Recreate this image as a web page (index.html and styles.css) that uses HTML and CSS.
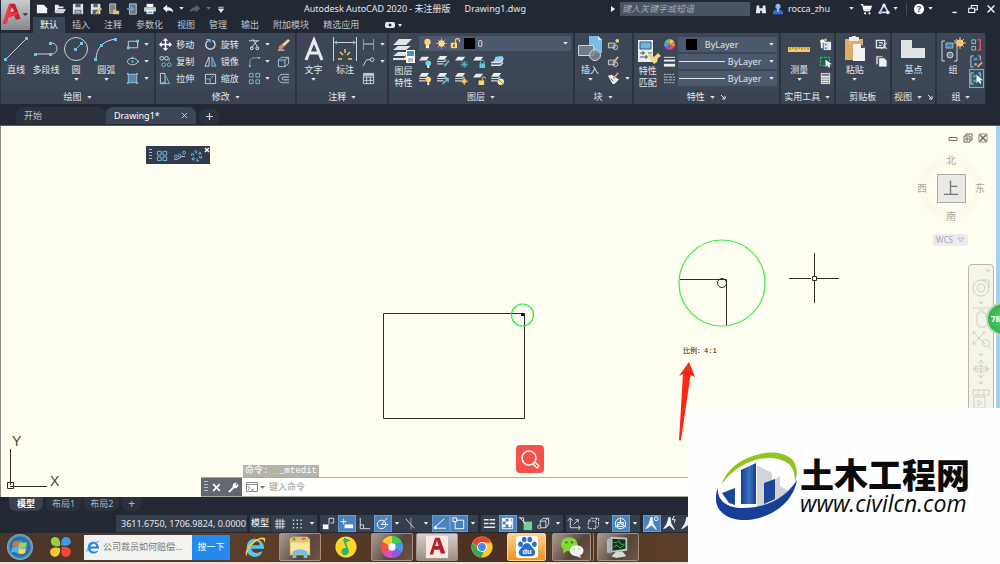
FILE: index.html
```html
<!DOCTYPE html>
<html lang="zh-CN">
<head>
<meta charset="utf-8">
<meta name="viewport" content="width=device-width, initial-scale=1">
<title>Autodesk AutoCAD 2020 - 未注册版 Drawing1.dwg</title>
<link rel="stylesheet" href="styles.css">
</head>
<body>
<svg class="defs" aria-hidden="true">
  <symbol id="down" viewBox="0 0 6 4"><path d="M0 0h6L3 3.6z" fill="#e4e7ea"/></symbol>
  <symbol id="sheets" viewBox="0 0 14 14"><path d="M3 1h8L8 5H0z" fill="#eceeef"/><path d="M0 7h8l2-2M0 9.500h7" fill="none" stroke="#cfd4d8" stroke-width="1.300"/></symbol>
  <symbol id="sheet" viewBox="0 0 14 14"><path d="M3 2h8L8 6H0z" fill="#e6e8ea"/></symbol>
  <symbol id="figure" viewBox="0 0 18 18"><path d="M8 2L6 9l-4 6 3-1 4-3 4 4 2 1-4-7-1-7z" fill="#edf1f4"/></symbol>
</svg>

<header class="top">
  <button class="app-menu" aria-label="应用程序菜单"><svg viewBox="0 0 30 30"><path d="M2 24L9 3h6l6 16-5 1-2-5-6 2-2 7z" fill="#c81e28"/><path d="M2 24L9 3l3 5-2 5 8-1 1 2-11 4-2 6z" fill="#ec3a42"/><path d="M10 12l2-5 2 4z" fill="#d8dadb"/><path d="M23 13h6l-3 3z" fill="#333"/></svg></button>
  <div class="titlebar">
    <div class="quick">
      <button aria-label="新建"><svg viewBox="0 0 14 14"><path d="M1 2h8l4 4v6H1z" fill="#eef0f1"/></svg></button>
      <button aria-label="打开"><svg viewBox="0 0 14 14"><path d="M1 12V2h4l1 2h5v2H5z" fill="#e8eaec"/><path d="M4 7h10l-3 5H1z" fill="#cfd4d8"/></svg></button>
      <button aria-label="保存"><svg viewBox="0 0 14 14"><path d="M1 1h12v12H1z" fill="#dfe2e4"/><path d="M4 1h6v4H4zM3 8h8v5H3z" fill="#59616d"/><path d="M4 9h6v1H4zm0 2h6v1H4z" fill="#fff"/></svg></button>
      <button aria-label="另存为"><svg viewBox="0 0 14 14"><path d="M1 1h11v12H1z" fill="#dfe2e4"/><path d="M4 1h5v4H4zM3 8h7v5H3z" fill="#59616d"/><path d="M6 12l6-7 2 2-6 6z" fill="#e9b45c"/></svg></button>
      <button aria-label="从 Web 打开"><svg viewBox="0 0 14 14"><path d="M2 1h7v11H2z" fill="#7b838d" stroke="#c5cacf"/><path d="M6 8h3l1 1h3v4H6z" fill="#f0c36a"/></svg></button>
      <button aria-label="保存到移动设备"><svg viewBox="0 0 14 14"><path d="M4 1h8v12H4z" fill="#6a7380" stroke="#cdd2d6"/><path d="M1 6h5V3l4 4-4 4V8H1z" fill="#5aa8e0"/></svg></button>
      <button aria-label="打印"><svg viewBox="0 0 14 14"><path d="M3 1h8v4H3z" fill="#fff"/><path d="M0 5h14v5H0z" fill="#c8cdd1"/><path d="M3 8h8v5H3z" fill="#fff"/><path d="M4 10h6v2H4z" fill="#68a9c4"/></svg></button>
      <button aria-label="放弃"><svg viewBox="0 0 14 14"><path d="M1 6l5-4v3c4 0 7 2 7 6-2-2-4-3-7-2v2z" fill="#eef0f1"/></svg></button>
      <svg class="dd"><use href="#down"/></svg>
      <button aria-label="重做" disabled><svg viewBox="0 0 14 14"><path d="M13 6L8 2v3C4 5 1 7 1 11c2-2 4-3 7-2v2z" fill="#59606b"/></svg></button>
      <svg class="dd dim"><use href="#down"/></svg>
      <button class="narrow" aria-label="自定义快速访问工具栏"><svg viewBox="0 0 8 14"><path d="M1 5h6M1 7h6l-3 4z" stroke="#e4e7ea" fill="#e4e7ea"/></svg></button>
    </div>
    <h1 class="title"><span>Autodesk AutoCAD 2020 - 未注册版</span><span>Drawing1.dwg</span></h1>
    <div class="account">
      <svg class="tri" viewBox="0 0 4 6"><path d="M0 0l4 3-4 3z" fill="#fff"/></svg>
      <input class="search" type="search" aria-label="搜索" placeholder="键入关键字或短语">
      <button aria-label="搜索"><svg viewBox="0 0 14 14"><path d="M2 3h3v3h4V3h3l1 9H8V9H6v3H1z" fill="#e8ebee"/></svg></button>
      <button class="user"><svg viewBox="0 0 14 14"><circle cx="7" cy="4" r="3" fill="#8fb5ef"/><path d="M1 13c0-5 3-5 6-5s6 0 6 5z" fill="#2f6fd6"/><path d="M6 7h2v3H6z" fill="#b8d0f4"/></svg><span>rocca_zhu</span></button>
      <svg class="dd user-dd"><use href="#down"/></svg>
      <button aria-label="购物车"><svg viewBox="0 0 14 14"><path d="M1 2h2l2 7h7M4 4h9l-1 3H5z" fill="none" stroke="#fff" stroke-width="1.500"/><path d="M4 4h9l-1 3H5z" fill="#fff"/><circle cx="6" cy="12" r="1.300" fill="#fff"/><circle cx="11" cy="12" r="1.300" fill="#fff"/></svg></button>
      <button aria-label="Autodesk App Store"><svg viewBox="0 0 14 14"><path d="M7 2l5 9H2z" fill="none" stroke="#c8d6f3" stroke-width="2"/><circle cx="7" cy="3" r="2" fill="#fff"/><circle cx="2.500" cy="11" r="2" fill="#a6bdec"/><circle cx="11.500" cy="11" r="2" fill="#fff"/></svg></button>
      <svg class="dd"><use href="#down"/></svg>
      <i class="sep"></i>
      <button aria-label="帮助"><svg viewBox="0 0 14 14"><circle cx="7" cy="7" r="6" fill="#fff"/><text x="7" y="11" text-anchor="middle" class="qmark">?</text></svg></button>
      <svg class="dd"><use href="#down"/></svg>
      <span class="window-buttons">
        <button aria-label="最小化"><svg viewBox="0 0 14 14"><path d="M4 11h5" stroke="#fff" stroke-width="1.600"/></svg></button>
        <button aria-label="还原"><svg viewBox="0 0 14 14"><path d="M5 6V3h7v5h-3M2 6h7v5H2z" fill="none" stroke="#fff" stroke-width="1.200"/></svg></button>
        <button aria-label="关闭"><svg viewBox="0 0 14 14"><path d="M3 3l8 8M11 3l-8 8" stroke="#fff" stroke-width="1.600"/></svg></button>
      </span>
    </div>
  </div>
  <nav class="ribbon-tabs">
    <button class="active">默认</button><button>插入</button><button>注释</button><button>参数化</button><button>视图</button><button>管理</button><button>输出</button><button>附加模块</button><button>精选应用</button>
    <button class="more" aria-label="更多"><svg viewBox="0 0 18 8"><rect width="10" height="6" y="1" rx="2" fill="#e8eaec"/><circle cx="5" cy="4" r="1.500" fill="#232934"/><path d="M13 3h4l-2 3z" fill="#e8eaec"/></svg></button>
  </nav>
</header>

<section class="ribbon">
  <section class="panel">
    <div class="tools draw">
      <button class="big"><svg viewBox="0 0 26 26"><path d="M2 24L24 2" stroke="#ccd3d9"/><path d="M1 22h3v3H1zM22 1h3v3h-3z" fill="#6cc3ec"/></svg>直线</button>
      <button class="big"><svg viewBox="0 0 26 26"><path d="M2 18h16c8 0 8-11 0-11" fill="none" stroke="#ccd3d9"/><path d="M1 17h3v3H1zm15 0h3v3h-3zm0-11h3v3h-3z" fill="#6cc3ec"/></svg>多段线</button>
      <button class="big"><svg viewBox="0 0 26 26"><circle cx="13" cy="13" r="11.500" fill="none" stroke="#ccd3d9"/><path d="M13 13l5-5" stroke="#6cc3ec"/><path d="M11 12h3v3h-3zM17 6h3v3h-3z" fill="#6cc3ec"/></svg>圆<svg class="dd"><use href="#down"/></svg></button>
      <button class="big"><svg viewBox="0 0 26 26"><path d="M3 24C3 12 10 4 24 3" fill="none" stroke="#ccd3d9"/><path d="M1 22h3v3H1zM7 8h3v3H7zM21 2h3v3h-3z" fill="#6cc3ec"/></svg>圆弧<svg class="dd"><use href="#down"/></svg></button>
      <div class="stack">
        <button aria-label="矩形"><svg viewBox="0 0 14 14"><path d="M2.500 3.500h10v7h-10z" fill="none" stroke="#ccd3d9"/><path d="M1 9h3v3H1zm10-7h3v3h-3z" fill="#6cc3ec"/></svg><svg class="dd"><use href="#down"/></svg></button>
        <button aria-label="椭圆"><svg viewBox="0 0 14 14"><ellipse cx="7" cy="7" rx="5.500" ry="3.500" fill="none" stroke="#ccd3d9"/><path d="M6 6h2v2H6zM6 2h2v2H6zM12 6h2v2h-2z" fill="#6cc3ec"/></svg><svg class="dd"><use href="#down"/></svg></button>
        <button aria-label="图案填充"><svg viewBox="0 0 14 14"><path d="M2.500 2.500h9v9h-9z" fill="#5c86a4" stroke="#9ec3dc"/><path d="M1 1h2v2H1zm10 0h2v2h-2zM1 11h2v2H1zm10 0h2v2h-2z" fill="#6cc3ec"/></svg><svg class="dd"><use href="#down"/></svg></button>
      </div>
    </div>
    <h2>绘图<svg class="dd"><use href="#down"/></svg></h2>
  </section>

  <section class="panel">
    <div class="tools modify">
      <button class="named"><svg viewBox="0 0 14 14"><path d="M7 1v12M1 7h12" stroke="#fff" stroke-width="1.500"/><path d="M7 0l3 3H4zM7 14l3-3H4zM0 7l3-3v6zM14 7l-3-3v6z" fill="#fff"/></svg>移动</button>
      <button class="named"><svg viewBox="0 0 14 14"><path d="M9 2.500a5 5 0 1 1-5 .5" fill="none" stroke="#d5dade" stroke-width="1.500"/><path d="M2 1h5v4z" fill="#6cc3ec"/></svg>旋转</button>
      <button aria-label="修剪"><svg viewBox="0 0 14 14"><path d="M1 3h11M5 1l5 8M10 3L4 10" stroke="#dfe3e6"/><circle cx="4" cy="11" r="1.500" fill="none" stroke="#fff"/><circle cx="10" cy="11" r="1.500" fill="none" stroke="#fff"/></svg><svg class="dd"><use href="#down"/></svg></button>
      <button aria-label="删除"><svg viewBox="0 0 14 14"><path d="M5 7l7-6 2 2-6 6z" fill="#f0d28b"/><path d="M2 9l3-2 3 2-3 3H2z" fill="#ef7e58"/><path d="M1 13h7" stroke="#fff"/></svg></button>
      <button class="named"><svg viewBox="0 0 14 14"><circle cx="3" cy="3.500" r="2" fill="none" stroke="#d5dade"/><circle cx="8" cy="3.500" r="2" fill="none" stroke="#d5dade"/><circle cx="5" cy="10.500" r="2" fill="none" stroke="#6cc3ec"/><circle cx="11" cy="10.500" r="2" fill="none" stroke="#6cc3ec"/><path d="M11 3v4" stroke="#6cc3ec"/></svg>复制</button>
      <button class="named"><svg viewBox="0 0 14 14"><path d="M5.500 2v10H1z" fill="none" stroke="#d5dade"/><path d="M8.500 2v10H13z" fill="#416984" stroke="#6cc3ec"/></svg>镜像</button>
      <button aria-label="圆角"><svg viewBox="0 0 14 14"><path d="M2 13V8c0-4 2-5 6-5h5" fill="none" stroke="#6bb1d6"/><path d="M2 13v-2m9-8h2" stroke="#ddd"/></svg><svg class="dd"><use href="#down"/></svg></button>
      <button aria-label="分解"><svg viewBox="0 0 14 14"><path d="M1.500 5.500h7v7h-7zM1.500 5.500l3-3h8l-4 3M12.500 2.500v7l-4 3" fill="none" stroke="#a6cbe0"/></svg></button>
      <button class="named"><svg viewBox="0 0 14 14"><path d="M1.500 1.500h5v11h-5z" fill="none" stroke="#d5dade"/><path d="M6.500 3l5 9.500h-5" fill="none" stroke="#6cc3ec"/><path d="M3 11h4v2H3z" fill="#6cc3ec"/></svg>拉伸</button>
      <button class="named"><svg viewBox="0 0 14 14"><path d="M1.500 2.500h11v10h-11z" fill="none" stroke="#d5dade"/><path d="M1.500 7.500h5v5h-5z" fill="none" stroke="#6cc3ec"/><path d="M7 7l3-3" stroke="#6cc3ec"/></svg>缩放</button>
      <button aria-label="阵列"><svg viewBox="0 0 14 14"><path d="M1.500 1.500h4v4h-4zm7 0h4v4h-4zm-7 7h4v4h-4z" fill="none" stroke="#6cc3ec"/><path d="M8.500 8.500h4v4h-4z" fill="none" stroke="#6cc3ec"/></svg><svg class="dd"><use href="#down"/></svg></button>
      <button aria-label="偏移"><svg viewBox="0 0 14 14"><path d="M13 2.500H6a4.500 4.500 0 0 0 0 9h7" fill="none" stroke="#a6cbe0"/><path d="M13 5.500H7a1.500 1.500 0 0 0 0 3h6" fill="none" stroke="#d5dade"/></svg></button>
    </div>
    <h2>修改<svg class="dd"><use href="#down"/></svg></h2>
  </section>

  <section class="panel">
    <div class="tools">
      <button class="big"><svg viewBox="0 0 26 26"><path d="M5 24L13 4l8 20M8 17h10" fill="none" stroke="#e8ebed" stroke-width="3"/></svg>文字<svg class="dd"><use href="#down"/></svg></button>
      <button class="big"><svg viewBox="0 0 26 26"><path d="M1.500 1v24M24.500 1v24M2 6.500h22" stroke="#ccd3d9"/><path d="M2 6.500l3-2v4zM24 6.500l-3-2v4z" fill="#6cc3ec"/><path d="M6 23h4M16 23h4M8 16l3 3M18 16l-3 3M13 13v4" stroke="#f2c85d" stroke-width="1.500"/></svg>标注</button>
      <div class="stack">
        <button aria-label="线性标注"><svg viewBox="0 0 14 14"><path d="M1.500 1v12M12.500 1v12" stroke="#7faec8"/><path d="M2 6.500h10" stroke="#d5dade"/></svg><svg class="dd"><use href="#down"/></svg></button>
        <button aria-label="引线"><svg viewBox="0 0 14 14"><path d="M1 12L5 5h4" fill="none" stroke="#d5dade"/><circle cx="11" cy="5" r="2" fill="none" stroke="#d5dade"/></svg><svg class="dd"><use href="#down"/></svg></button>
        <button aria-label="表格"><svg viewBox="0 0 14 14"><path d="M1.500 1.500h11v11h-11zM1.500 5.500h11M1.500 9h11M5 5v8M9 5v8" fill="none" stroke="#ccd3d9"/><path d="M2 2h10v2H2z" fill="#ccd3d9"/></svg></button>
      </div>
    </div>
    <h2>注释<svg class="dd"><use href="#down"/></svg></h2>
  </section>

  <section class="panel">
    <div class="tools">
      <button class="big two"><svg viewBox="0 0 26 26"><path d="M8 1h13l-6 6H2zM7 8h13l-5 4H2zM7 14h11l-4 4H2zM2 20h11l2-2v4H2z" fill="#e3e6e8"/><path d="M15 12h9v13h-9z" fill="#fff"/><path d="M16 13h7v5h-7z" fill="#3f94d2"/><path d="M17 21h5M17 23h5" stroke="#777"/></svg>图层<br>特性</button>
      <div class="layer-side">
        <label class="combo layer-combo">
          <svg viewBox="0 0 14 14"><circle cx="7" cy="5" r="4" fill="#ffd46b"/><path d="M5 9h4v4H5z" fill="#eef0f2"/></svg>
          <svg viewBox="0 0 14 14"><path d="M7 0v14M0 7h14M2 2l10 10M12 2L2 12" stroke="#e9ae5a"/><circle cx="7" cy="7" r="4" fill="#ffd9a0"/></svg>
          <svg viewBox="0 0 14 14"><path d="M1 6h8v7H1z" fill="#ffd46b"/><path d="M7 6V3c0-3 5-3 5 0v2" fill="none" stroke="#ffd46b" stroke-width="1.500"/><path d="M4 8h2v3H4z" fill="#66502b"/></svg>
          <i class="swatch"></i>
          <select aria-label="图层"><option>0</option></select><svg class="dd"><use href="#down"/></svg>
        </label>
        <div class="layer-grid">
          <button aria-label="关"><svg viewBox="0 0 14 14"><use href="#sheet"/><circle cx="10" cy="9" r="3" fill="#66dbe2"/><path d="M9 11h2v3H9z" fill="#fff"/></svg></button>
          <button aria-label="隔离"><svg viewBox="0 0 14 14"><use href="#sheets"/><path d="M8 12l5-6" stroke="#7da6bc" stroke-width="2"/></svg></button>
          <button aria-label="冻结"><svg viewBox="0 0 14 14"><use href="#sheet"/><path d="M10 6v8M6 10h8M7 7l6 6M13 7l-6 6" stroke="#59c0c8"/></svg></button>
          <button aria-label="锁定"><svg viewBox="0 0 14 14"><use href="#sheet"/><path d="M7 9h6v5H7z" fill="#5cc9d8"/><path d="M8 9V7c0-2 4-2 4 0v2" fill="none" stroke="#5cc9d8"/></svg></button>
          <button aria-label="置为当前"><svg viewBox="0 0 14 14"><path d="M5 2l7-1 2 3-4 4H2z" fill="#8ccff5"/><path d="M0 8h10l3-3M0 11h10l3-3" stroke="#e6e8ea" fill="none" stroke-width="1.500"/></svg></button>
          <button aria-label="打开图层"><svg viewBox="0 0 14 14"><use href="#sheets"/><circle cx="10" cy="8" r="3" fill="#ffd46b"/><path d="M9 11h2v3H9z" fill="#fff"/></svg></button>
          <button aria-label="取消隔离"><svg viewBox="0 0 14 14"><use href="#sheets"/><path d="M6 13l6-6M8 7h4v4" stroke="#6cc3ec" stroke-width="1.500" fill="none"/></svg></button>
          <button aria-label="解冻"><svg viewBox="0 0 14 14"><use href="#sheets"/><circle cx="10" cy="10" r="2.500" fill="#f6c35e"/><path d="M10 6v8M6 10h8" stroke="#f6c35e"/></svg></button>
          <button aria-label="解锁"><svg viewBox="0 0 14 14"><use href="#sheet"/><path d="M6 9h6v5H6z" fill="#ffd46b"/><path d="M10 9V7c0-2 4-2 4 0" fill="none" stroke="#ffd46b"/></svg></button>
          <button aria-label="匹配图层"><svg viewBox="0 0 14 14"><use href="#sheets"/><circle cx="10.500" cy="10.500" r="3.500" fill="#f4e8af"/><path d="M8 8l5 5" stroke="#977a3a"/></svg></button>
        </div>
      </div>
    </div>
    <h2>图层<svg class="dd"><use href="#down"/></svg></h2>
  </section>

  <section class="panel">
    <div class="tools">
      <button class="big"><svg viewBox="0 0 26 26"><path d="M12 0h9l4 4v13H12z" fill="#79bde8"/><path d="M21 0v4h4z" fill="#d8edf9"/><path d="M1.500 9.500h15v10h-15z" fill="#737b86" stroke="#ccd3d9"/><circle cx="18" cy="19" r="5.500" fill="#7e8894" fill-opacity=".8" stroke="#ccd3d9"/></svg>插入<svg class="dd"><use href="#down"/></svg></button>
      <div class="stack">
        <button aria-label="创建"><svg viewBox="0 0 14 14"><path d="M1.500 5.500h7v5h-7z" fill="#59626f" stroke="#ccd3d9"/><circle cx="9" cy="10" r="2.500" fill="none" stroke="#ccd3d9"/><circle cx="11" cy="3" r="2" fill="#ffd46b"/></svg></button>
        <button aria-label="编辑"><svg viewBox="0 0 14 14"><path d="M1.500 5.500h7v5h-7z" fill="#59626f" stroke="#ccd3d9"/><circle cx="9" cy="10" r="2.500" fill="none" stroke="#ccd3d9"/><path d="M7 8l5-6" stroke="#e6ad93" stroke-width="2"/></svg></button>
        <button aria-label="编辑属性"><svg viewBox="0 0 14 14"><path d="M1 4l4-1 8 5-5 5H6z" fill="#eef0f1"/><path d="M7 7l5-6" stroke="#e89362" stroke-width="2"/><path d="M4 7l3 3" stroke="#444"/></svg><svg class="dd"><use href="#down"/></svg></button>
      </div>
    </div>
    <h2>块<svg class="dd"><use href="#down"/></svg></h2>
  </section>

  <section class="panel">
    <div class="tools">
      <button class="big two"><svg viewBox="0 0 26 26"><path d="M2 2h15v22H2z" fill="#e9ebed"/><path d="M4 4h11v7H4z" fill="#68b7e8" stroke="#4b555f"/><path d="M4 15h5M12 15h4M4 19h8M7 13v4M10 17v4" stroke="#4b555f"/><path d="M14 15l4 4 4-4 3 3-3 2-1 4-3 2-6-8z" fill="#f1d987"/></svg>特性<br>匹配</button>
      <div class="property-grid">
        <svg viewBox="0 0 14 14"><path d="M7 7V1a6 6 0 0 1 5 3z" fill="#ffcb3d"/><path d="M7 7l5-3a6 6 0 0 1 0 6z" fill="#ff7c43"/><path d="M7 7l5 3a6 6 0 0 1-5 3z" fill="#e64678"/><path d="M7 7v6a6 6 0 0 1-5-3z" fill="#8755cf"/><path d="M7 7l-5 3a6 6 0 0 1 0-6z" fill="#34a8dc"/><path d="M7 7L2 4a6 6 0 0 1 5-3z" fill="#69c857"/></svg>
        <label class="combo"><i class="swatch"></i><select aria-label="颜色"><option>ByLayer</option></select><svg class="dd"><use href="#down"/></svg></label>
        <svg viewBox="0 0 14 14"><path d="M1 2.500h12" stroke="#eee"/><path d="M1 6h12" stroke="#eee" stroke-width="2"/><path d="M1 11h12" stroke="#eee" stroke-width="3"/></svg>
        <label class="combo"><i class="line"></i><select aria-label="线宽"><option>ByLayer</option></select><svg class="dd"><use href="#down"/></svg></label>
        <svg viewBox="0 0 14 14"><path d="M1 2.500h12M1 11.500h12" stroke="#ccd3d9" stroke-dasharray="2 1"/><path d="M1 5.500h12M1 8.500h12" stroke="#ccd3d9" stroke-dasharray="4 1"/></svg>
        <label class="combo"><i class="line"></i><select aria-label="线型"><option>ByLayer</option></select><svg class="dd"><use href="#down"/></svg></label>
      </div>
    </div>
    <h2>特性<svg class="dd"><use href="#down"/></svg><svg class="launch" viewBox="0 0 6 6"><path d="M1 1l4 4M5 2v3H2" stroke="#e4e7ea" fill="none"/></svg></h2>
  </section>

  <section class="panel">
    <div class="tools">
      <button class="big"><svg viewBox="0 0 26 26"><path d="M2 11h22v5H2z" fill="#f4cc62"/><path d="M4 11v3M7 11v2M10 11v3M13 11v2M16 11v3M19 11v2M22 11v3" stroke="#8d7030"/></svg>测量<svg class="dd"><use href="#down"/></svg></button>
      <div class="stack">
        <button aria-label="点样式"><svg viewBox="0 0 14 14"><path d="M5 4h8v9H5z" fill="#e6edf2"/><path d="M6 6h3v2H6zm0 4h3v2H6z" fill="#62a9d8"/><path d="M1 3l3-2 3 3-3 1v6H2V6z" fill="#fff"/><circle cx="7" cy="2" r="1.500" fill="#eaaa68"/></svg></button>
        <button aria-label="快速选择"><svg viewBox="0 0 14 14"><path d="M1.500 2.500h10v9h-10z" fill="#215d4c" stroke="#3cbb76" stroke-dasharray="3 1"/><path d="M7 5v8l2-2 2 3 1-1-1-3h3z" fill="#fff"/></svg></button>
        <button aria-label="计算器"><svg viewBox="0 0 14 14"><path d="M2 1h10v12H2z" fill="#dfe2e4"/><path d="M3 2h8v2H3z" fill="#656e79"/><path d="M3 6.500h8M3 9h8M3 11.500h8" stroke="#5b636d" stroke-dasharray="2 1"/></svg></button>
      </div>
    </div>
    <h2>实用工具<svg class="dd"><use href="#down"/></svg></h2>
  </section>

  <section class="panel">
    <div class="tools">
      <button class="big"><svg viewBox="0 0 26 26"><path d="M3 3h18v21H3z" fill="#dcae68"/><path d="M7 1h3c0-2 4-2 4 0h3v4H7z" fill="#e9ebed"/><path d="M11 8h8l4 4v13H11z" fill="#f0f1f2"/><path d="M19 8v4h4z" fill="#474e59"/></svg>粘贴<svg class="dd"><use href="#down"/></svg></button>
      <div class="stack">
        <button aria-label="剪切"><svg viewBox="0 0 14 14"><path d="M1.500 2.500h9v8h-9zM4 5h4M4 8h3" fill="none" stroke="#dfe2e4" stroke-width="1.500"/><path d="M7 5l6 7M13 5l-6 7" stroke="#dfe2e4"/></svg></button>
        <button aria-label="复制剪裁"><svg viewBox="0 0 14 14"><path d="M1 1h7v9H1z" fill="#abb2b9"/><path d="M4 3h6l3 3v7H4z" fill="#f0f1f2" stroke="#3c4656"/></svg></button>
      </div>
    </div>
    <h2>剪贴板</h2>
  </section>

  <section class="panel">
    <div class="tools solo">
      <button class="big"><svg viewBox="0 0 26 26"><path d="M1 4h11v8h13v10H1z" fill="#e0e2e4"/></svg>基点<svg class="dd"><use href="#down"/></svg></button>
    </div>
    <h2>视图<svg class="dd"><use href="#down"/></svg><svg class="launch" viewBox="0 0 6 6"><path d="M1 1l4 4M5 2v3H2" stroke="#e4e7ea" fill="none"/></svg></h2>
  </section>

  <section class="panel">
    <div class="tools">
      <button class="big"><svg viewBox="0 0 26 26"><path d="M5 5H2v20h3M14 5h3v20h-3" fill="none" stroke="#ccd3d9"/><path d="M6 7h7v5H6z" fill="#3d82ae" stroke="#84c3e5"/><circle cx="10" cy="19" r="3" fill="#737b86" stroke="#ccd3d9"/><circle cx="20" cy="7" r="3.500" fill="#ffd68b"/><path d="M20 1v12M14 7h12M16 3l8 8M24 3l-8 8" stroke="#f2ba62"/></svg>组</button>
      <div class="stack">
        <button aria-label="解除编组"><svg viewBox="0 0 14 14"><path d="M2 2h4v4H2zm0 7h4v4H2z" fill="none" stroke="#aebac4"/><path d="M8 2h3v11H8M11 2v11" stroke="#e65661" fill="none" stroke-width="1.500"/></svg></button>
        <button aria-label="组编辑"><svg viewBox="0 0 14 14"><path d="M4 1H1v12h3M9 1h2v5" fill="none" stroke="#ccd3d9"/><path d="M4 3h4v3H4z" fill="#4a90c0"/><circle cx="6" cy="10" r="1.500" fill="#aaa"/><path d="M8 13l5-5" stroke="#eaa660" stroke-width="2"/></svg></button>
        <button class="on" aria-label="启用组选择"><svg viewBox="0 0 14 14"><path d="M4 1H1v12h3M9 1h2v4" fill="none" stroke="#d5dade"/><path d="M3 3h4v3H3zm0 5h4v3H3z" fill="#36ab7c"/><path d="M7 3v9l2-2 2 3 1-1-1-3h3z" fill="#fff"/></svg></button>
      </div>
    </div>
    <h2>组<svg class="dd"><use href="#down"/></svg></h2>
  </section>
</section>

<nav class="file-tabs">
  <button class="file-tab">开始</button>
  <button class="file-tab current"><span>Drawing1*</span><svg viewBox="0 0 8 8"><path d="M1 1l6 6M7 1L1 7" stroke="#d3d7db"/></svg></button>
  <button class="add" aria-label="新图形"><svg viewBox="0 0 8 8"><path d="M4 0v8M0 4h8" stroke="#cdd2d7" stroke-width="1.400"/></svg></button>
</nav>

<main class="canvas">
  <svg class="drawing" width="995" height="330" viewBox="0 0 995 330">
    <g fill="none" stroke="#2c2c28">
      <path d="M383.500 187.500h141v105h-141z"/>
      <path d="M680 153.500h46.500V199"/>
      <circle cx="722" cy="157" r="4.500"/>
      <path d="M789 152.500h22M817 152.500h22M814.500 127v23M814.500 155v22"/>
      <path d="M812.500 150.500h4v4h-4z"/>
    </g>
    <path d="M521 187h3v3h-3z" fill="#111"/>
    <circle cx="522.500" cy="189" r="11" fill="none" stroke="#26ee3c" stroke-width="1.200"/>
    <circle cx="722" cy="157" r="43" fill="none" stroke="#38f04c" stroke-width="1.200"/>
    <text x="683" y="227" class="scale">比例：4:1</text>
    <path d="M689 236l6 15-4.500-2L681 314q-1 1-2 0l4-66-4 2z" fill="#ff2517"/>
  </svg>

  <div class="array-bar">
    <i class="grip"></i>
    <button aria-label="矩形阵列"><svg viewBox="0 0 14 14"><path d="M1.500 2.500h4v4h-4zm6 0h4v4h-4zm-6 6h4v4h-4zm6 0h4v4h-4z" fill="none" stroke="#76bce4"/></svg></button>
    <button aria-label="路径阵列"><svg viewBox="0 0 14 14"><path d="M1 11c5 2 6-4 12-3" fill="none" stroke="#ccd3d9"/><circle cx="3" cy="8" r="1.500" fill="none" stroke="#76bce4"/><circle cx="7" cy="7" r="1.500" fill="none" stroke="#76bce4"/><circle cx="12" cy="4" r="1.500" fill="none" stroke="#76bce4"/></svg></button>
    <button aria-label="环形阵列"><svg viewBox="0 0 14 14"><circle cx="7" cy="7.500" r="4.500" fill="none" stroke="#76bce4" stroke-width="3" stroke-dasharray="2.500 2.200"/><circle cx="7" cy="7.500" r="4.500" fill="none" stroke="#36455a"/></svg></button>
    <button class="close" aria-label="关闭"><svg viewBox="0 0 6 6"><path d="M1 1l4 4M5 1L1 5" stroke="#fff" stroke-width="1.400"/></svg></button>
  </div>

  <div class="doc-buttons">
    <button aria-label="最小化视口"><svg viewBox="0 0 10 10"><path d="M1 4.500h8v3H1z" fill="none" stroke="#737474"/></svg></button>
    <button aria-label="还原视口"><svg viewBox="0 0 10 10"><path d="M3 3V1h6v6H7M1 3h6v6H1zM3 5h2v2H3z" fill="none" stroke="#666768"/></svg></button>
    <button aria-label="关闭视口"><svg viewBox="0 0 10 10"><path d="M1 1h8v8H1z" fill="none" stroke="#8a8b8b"/><path d="M2 2l6 6M8 2L2 8" stroke="#666768" stroke-width="1.500"/></svg></button>
  </div>

  <div class="viewcube">
    <button class="north">北</button><button class="west">西</button><button class="face">上</button><button class="east">东</button><button class="south">南</button>
  </div>
  <button class="wcs">WCS <svg viewBox="0 0 8 6"><path d="M1 1h6L4 5z" fill="none" stroke="#c2c1cb"/></svg></button>

  <div class="navbar">
    <svg viewBox="0 0 24 144" fill="none" stroke="#d2d1c8">
      <path d="M17 6h4M17 4l2 2 2-2"/>
      <circle cx="12" cy="23" r="8"/><circle cx="12" cy="23" r="4"/><path d="M12 15h8v8"/>
      <path d="M10 37h4l-2 2zM4 43h16"/>
      <path d="M8 58V48h3v-3h3v3h3v4h3v6l-4 4h-6z"/>
      <path d="M4 67l12 12M16 67L4 79M4 70v-3h3M16 67h-3M4 76v3h3"/><circle cx="17" cy="78" r="3.500"/><path d="M19 81l3 3"/>
      <path d="M10 89h4l-2 2z"/>
      <path d="M12 95v18M4 104h16M9 98l3-3 3 3M9 110l3 3 3-3M7 101l-3 3 3 3M17 101l3 3-3 3"/><ellipse cx="12" cy="104" rx="6" ry="3"/>
      <path d="M10 117h4l-2 2zM4 125h16v5H4zM9 125v5M15 125v5M5 132h11v11H5zM9 135l4 3-4 3z"/>
    </svg>
  </div>
  <div class="ball">78</div>
  <button class="find" aria-label="识图"><svg viewBox="0 0 28 28"><circle cx="13" cy="13" r="7" fill="none" stroke="#fff" stroke-width="1.500"/><path d="M18 18l1-1 4 4-2 2-4-4z" fill="none" stroke="#fff" stroke-width="1.300"/></svg></button>

  <svg class="ucs" width="66" height="60" viewBox="0 0 66 60">
    <path d="M10.500 15v36M10 52.500h37M7.500 48.500h6v6h-6z" fill="none" stroke="#2c2c28"/>
    <text x="12" y="12">Y</text><text x="50" y="52">X</text>
  </svg>

  <div class="command">
    <output class="history">命令:&nbsp; _mtedit</output>
    <div class="command-row">
      <i class="grip"></i>
      <button aria-label="关闭命令行"><svg viewBox="0 0 10 10"><path d="M2 2l6 6M8 2L2 8" stroke="#fff" stroke-width="1.500"/></svg></button>
      <button aria-label="自定义"><svg viewBox="0 0 12 12"><path d="M1 11l5-5" stroke="#fff" stroke-width="2"/><path d="M5 5c0-3 2-5 5-4L8 3l1 1 2-2c1 3-1 5-4 5z" fill="#fff"/></svg></button>
      <div class="prompt"><svg viewBox="0 0 20 12"><path d="M1.500 1.500h11v9h-11zM1 3.500h12M3 5l2 2-2 2M6 9h3" fill="none" stroke="#888c8e"/><path d="M15 5h5l-2.500 3z" fill="#777"/></svg><input type="text" aria-label="命令行" placeholder="键入命令"></div>
    </div>
  </div>
</main>

<nav class="layout-tabs"><button class="active">模型</button><button>布局1</button><button>布局2</button><button class="plus" aria-label="新建布局">+</button></nav>

<footer class="status">
  <span class="coords">3611.6750, 1706.9824, 0.0000</span>
  <button class="model">模型</button>
  <button aria-label="栅格"><svg viewBox="0 0 18 18"><path d="M6.500 4v11M9.500 4v11M12.500 4v11M4 6.500h11M4 9.500h11M4 12.500h11" stroke="#d8dde1"/></svg></button>
  <button aria-label="捕捉"><svg viewBox="0 0 18 18"><path d="M4 5.500h11M4 9.500h11M4 13.500h11" stroke="#d8dde1" stroke-width="1.500" stroke-dasharray="1.500 2.500"/></svg></button>
  <svg class="sd"><use href="#down"/></svg>
  <button class="group" aria-label="推断约束"><svg viewBox="0 0 18 18"><path d="M3 10h6v5H3z" fill="#fff"/><path d="M9.500 10V3.500h5v5h-3" fill="none" stroke="#d8dde1"/></svg></button>
  <button class="on" aria-label="动态输入"><svg viewBox="0 0 18 18"><path d="M6 4v6M3 7h6" stroke="#fff"/><path d="M7 10h9v4H7z" fill="#fff"/></svg></button>
  <button aria-label="正交"><svg viewBox="0 0 18 18"><path d="M4.500 3v11.500H15M4 10.500h4v4" fill="none" stroke="#d8dde1"/></svg></button>
  <button class="on" aria-label="极轴"><svg viewBox="0 0 18 18"><circle cx="8" cy="10" r="4.500" fill="none" stroke="#fff"/><path d="M8 10h7M8 10l6-7" stroke="#fff"/></svg></button>
  <svg class="sd"><use href="#down"/></svg>
  <button aria-label="等轴测草图"><svg viewBox="0 0 18 18"><path d="M9.500 3v12" stroke="#bd8a84"/><path d="M4 4l9 10" stroke="#cfd5d9"/></svg></button>
  <svg class="sd wide"><use href="#down"/></svg>
  <button class="on" aria-label="对象捕捉追踪"><svg viewBox="0 0 18 18"><path d="M3 14h12M3 13L13 4" stroke="#fff"/><path d="M2 12h3v3H2z" fill="#fff"/></svg></button>
  <button class="on" aria-label="对象捕捉"><svg viewBox="0 0 18 18"><path d="M5.500 5.500h9v9h-9z" fill="none" stroke="#fff"/><path d="M3 3h4v4H3z" fill="#477dbc" stroke="#fff"/></svg></button>
  <svg class="sd"><use href="#down"/></svg>
  <button class="group" aria-label="线宽"><svg viewBox="0 0 18 18"><path d="M3 5h5M3 9h5M3 13h12M9 5h6M9 9h6" stroke="#e8ebed" stroke-width="1.500"/></svg></button>
  <button class="on" aria-label="透明度"><svg viewBox="0 0 18 18"><path d="M3.500 3.500h11v11h-11z" fill="none" stroke="#fff"/><path d="M4 4h3v3h3V4h3v3h1v3h-1v3h-3v-3H7v3H4v-3h3V7H4z" fill="#fff" fill-rule="evenodd"/></svg></button>
  <button aria-label="选择循环"><svg viewBox="0 0 18 18"><path d="M7 7h9v9H7z" fill="#76d09a"/><path d="M2 3h5v5M3 3l6 6" stroke="#e0e5e8" fill="none"/></svg></button>
  <button aria-label="三维对象捕捉"><svg viewBox="0 0 18 18"><path d="M5.500 6.500h6v7h-6zM5.500 6.500l3-3h6v6l-3 4M11 6l3-3" fill="none" stroke="#d8dde1"/><path d="M3 11h3v3H3z" fill="#3c4656" stroke="#e2bd87"/></svg></button>
  <svg class="sd"><use href="#down"/></svg>
  <button class="group" aria-label="动态 UCS"><svg viewBox="0 0 18 18"><path d="M4.500 4v9.500H15M2 6l2.500-3L7 6M8 10l5-5M10 5h3v3M13 11l2 2.500-2 2.500" fill="none" stroke="#d8dde1"/></svg></button>
  <button aria-label="选择过滤"><svg viewBox="0 0 18 18"><path d="M4.500 6.500h8v8h-8zM4.500 6.500l3-3h8v8l-3 3M12 6l3-3" fill="none" stroke="#d8dde1" stroke-dasharray="3 1"/></svg></button>
  <svg class="sd"><use href="#down"/></svg>
  <button class="on" aria-label="小控件"><svg viewBox="0 0 18 18"><circle cx="9" cy="9" r="5.500" fill="none" stroke="#fff"/><path d="M9 2v7M9 9l-6 4M9 9l6 4M6 8h6v4H6z" fill="none" stroke="#fff"/></svg></button>
  <svg class="sd"><use href="#down"/></svg>
  <button class="on group" aria-label="注释可见性"><svg viewBox="0 0 18 18"><use href="#figure"/><circle cx="14" cy="4" r="2" fill="none" stroke="#fff"/></svg></button>
  <button aria-label="自动缩放"><svg viewBox="0 0 18 18"><use href="#figure"/><path d="M14 1l-2 4h3l-1 3" stroke="#fff" fill="none"/></svg></button>
  <button aria-label="注释比例"><svg viewBox="0 0 18 18"><use href="#figure"/></svg></button>
</footer>

<nav class="taskbar">
  <button class="start" aria-label="开始菜单"><svg viewBox="0 0 28 28"><defs><radialGradient id="orb"><stop stop-color="#70c8ed"/><stop offset=".7" stop-color="#1b6ca5"/><stop offset="1" stop-color="#83b3c9"/></radialGradient></defs><circle cx="14" cy="14" r="13" fill="url(#orb)"/><path d="M7 9q3-2 6 0l-1 5q-3-2-6 0z" fill="#f06a31"/><path d="M14 9q3 2 7 0l-1 5q-3 2-7 0z" fill="#9fd34b"/><path d="M6 15q3-2 6 0l-1 5q-3-2-6 0z" fill="#4db6f0"/><path d="M13 15q3 2 7 0l-1 5q-3 2-7 0z" fill="#ffd543"/></svg></button>
  <button class="petals" aria-label="浏览器"><svg viewBox="0 0 24 24"><path d="M11 11C3 13 0 7 3 3c5-3 9 1 8 8z" fill="#97d044"/><path d="M12 10c0-8 5-10 9-6 3 5-2 8-9 6z" fill="#3d9bea"/><path d="M13 12c8-1 11 4 7 9-6 3-9-1-7-9z" fill="#f04a38"/><path d="M11 13c1 8-5 11-9 7-3-6 2-9 9-7z" fill="#ffc72d"/></svg></button>
  <form class="task-search"><svg viewBox="0 0 16 16"><path d="M14 9H5c0 4 5 4 8 2-1 5-11 5-11-3S13-1 14 9zM5 7h6c0-4-6-4-6 0z" fill="#2384dc" fill-rule="evenodd"/><path d="M1 13C-1 9 8 1 14 2" fill="none" stroke="#3fa4ee"/></svg><input type="text" aria-label="网页搜索" value="公司裁员如何赔偿..."><button type="button">搜一下</button></form>
  <button aria-label="Internet Explorer"><svg viewBox="0 0 26 26"><path d="M23 15H9c1 6 8 5 12 2-2 10-18 9-17-4S23 2 23 15zM9 11h9c0-6-9-6-9 0z" fill="#54c6f2" fill-rule="evenodd"/><path d="M4 23C-1 18 12 1 23 3c2 1 1 4 0 5 0-9-18 2-19 15z" fill="#f6cf45"/></svg></button>
  <button class="open" aria-label="资源管理器"><svg viewBox="0 0 26 26"><path d="M2 4l3-2h16l3 3v17H2z" fill="#e8c165"/><path d="M3 8h20v12H3z" fill="#fae5a0"/><path d="M5 3h3v3H5z" fill="#56a663"/><path d="M15 3h4v2h-4z" fill="#d05b4b"/><path d="M5 25v-7q8-5 16 0v7h-4v-4H9v4z" fill="#78bde8"/></svg></button>
  <button class="music" aria-label="QQ 音乐"><svg viewBox="0 0 26 26"><circle cx="13" cy="13" r="11.500" fill="#ffd529"/><path d="M11 3l7 3-5 2 3 9a4 4 0 1 1-3-3l-3-8z" fill="#25b56f"/></svg></button>
  <button class="open" aria-label="极速浏览器"><svg viewBox="0 0 26 26"><g stroke-width="8" fill="none"><path d="M13 5a8 8 0 0 1 7 4" stroke="#3fcf52"/><path d="M20 9a8 8 0 0 1 0 8" stroke="#3f9be8"/><path d="M20 17a8 8 0 0 1-7 4" stroke="#8f57e8"/><path d="M13 21a8 8 0 0 1-7-4" stroke="#df50b2"/><path d="M6 17a8 8 0 0 1 0-8" stroke="#ed583c"/><path d="M6 9a8 8 0 0 1 7-4" stroke="#ffc735"/></g><circle cx="13" cy="13" r="4" fill="#fff"/></svg></button>
  <button class="open bright" aria-label="AutoCAD"><svg viewBox="0 0 26 26"><path d="M1 1h24v24H1z" fill="#f8e9e5"/><path d="M5 21l6-18h5l6 17h-5l-1-4h-6l-1 5zM11 12h4l-2-6z" fill="#b71e2c" fill-rule="evenodd"/></svg></button>
  <button aria-label="Chrome"><svg viewBox="0 0 26 26"><circle cx="13" cy="13" r="11.500" fill="#fdc92d"/><path d="M3 8a11.500 11.500 0 0 1 20 0H13a5 5 0 0 0-4 7z" fill="#e94235"/><path d="M3 8l6 8 6 2-3 6.500A11.500 11.500 0 0 1 3 8z" fill="#37a853"/><circle cx="13" cy="13" r="5.500" fill="#fff"/><circle cx="13" cy="13" r="4.200" fill="#4688f1"/></svg></button>
  <button class="open baidu" aria-label="百度"><svg viewBox="0 0 26 26"><rect x="1" y="1" width="24" height="24" rx="3" fill="#fff"/><g fill="#276ed0"><ellipse cx="6" cy="10" rx="2.500" ry="3"/><ellipse cx="10" cy="5" rx="2.500" ry="3"/><ellipse cx="16" cy="5" rx="2.500" ry="3"/><ellipse cx="21" cy="10" rx="2.500" ry="3"/><path d="M13 9c4 0 4 3 7 6 4 4 1 9-3 8H9c-4 1-7-4-3-8 3-3 3-6 7-6z"/></g><text x="13" y="21" text-anchor="middle" class="du">du</text></svg></button>
  <button class="open stacked" aria-label="微信"><svg viewBox="0 0 26 26"><ellipse cx="10" cy="10" rx="9" ry="7.500" fill="#83d837"/><path d="M4 15l-1 5 5-3z" fill="#83d837"/><ellipse cx="18" cy="17" rx="7.500" ry="6" fill="#f0f2f1"/><path d="M21 21l2 4-5-2z" fill="#f0f2f1"/><path d="M6 7h2v2H6zm6 0h2v2h-2z" fill="#345c20"/><path d="M15 15h1v1h-1zm5 0h1v1h-1z" fill="#777"/></svg></button>
  <button class="open" aria-label="系统监视器"><svg viewBox="0 0 26 26"><path d="M1 5l4-2v17l-4-1z" fill="#aeb9bb"/><path d="M5 2l18 1v14L5 19z" fill="#bcc4c3"/><path d="M7 4l14 1v10L7 17z" fill="#132e1b"/><path d="M8 8h4l2-2 2 4h4M8 13l4-2 3 3 5-3" fill="none" stroke="#3ebc55"/><path d="M11 18h7l4 5-11 2-5-2z" fill="#d7dad7"/></svg></button>
</nav>

<aside class="watermark">
  <svg class="emblem" viewBox="0 0 84 70">
    <defs><linearGradient id="tower" x2="1"><stop stop-color="#123d94"/><stop offset=".55" stop-color="#3f73be"/><stop offset="1" stop-color="#123d94"/></linearGradient></defs>
    <path d="M41 14l15 8v8l8-5v10l12 7-12 13-23 5z" fill="#d2d4d8"/>
    <path d="M25 19l15-7v41H25z" fill="url(#tower)"/>
    <path d="M6 42l13-5v17l-6-2zM48 32l11-4v20l-11 5z" fill="#1b4699"/>
    <path d="M6 33C12 11 45-3 66 3c12 3 18 13 13 28 0-12-4-19-14-22C45 2 19 14 6 33z" fill="#91c51f"/>
    <path d="M2 37c-1 12 8 20 25 20 26 0 44-12 54-28C77 53 52 70 25 69 2 67-4 51 2 37z" fill="#173f97"/>
  </svg>
  <div class="brand"><strong>土木工程网</strong><span>www.civilcn.com</span></div>
</aside>
</body>
</html>
```
FILE: styles.css
```css
:root {
  --dark: #232934;
  --panel: #3c4655;
  --field: #4c586b;
  --text: #e3e6e9;
  --blue: #4b82bd;
}
* { box-sizing: border-box; }
body {
  margin: 0;
  min-height: 100vh;
  display: flex;
  flex-direction: column;
  position: relative;
  overflow: hidden;
  background: var(--dark);
  color: var(--text);
  font: 9px/12px "Noto Sans", "Noto Sans CJK SC", sans-serif;
}
button, input, select { font: inherit; color: inherit; margin: 0; padding: 0; border: 0; background: none; min-width: 0; }
svg { display: block; flex: none; }
h1, h2 { margin: 0; font: inherit; }
.defs { position: absolute; width: 0; height: 0; }
.dd { width: 5px; height: 3px; }
.dim { opacity: .4; }

/* Title bar and ribbon tabs */
.top { display: grid; grid-template: 17px 16px / 30px 1fr; column-gap: 3px; }
.app-menu { grid-row: 1 / 3; width: 29px; height: 30px; margin-left: 1px; background: linear-gradient(#c9cccd, #85898c); }
.app-menu svg { width: 28px; height: 28px; }
.titlebar { display: flex; align-items: center; }
.quick { width: 271px; display: flex; align-items: center; }
.quick button { width: 18px; display: grid; place-items: center; }
.quick svg:not(.dd), .account button > svg { width: 12px; height: 12px; }
.quick .narrow { width: 15px; }
.quick .dd { margin: 0 2px; }
.title { flex: 1; display: flex; gap: 14px; white-space: nowrap; }
.account { display: flex; align-items: center; }
.account button { width: 18px; display: flex; justify-content: center; }
.tri { width: 4px; height: 6px; margin-right: 5px; }
.search { width: 130px; height: 14px; padding: 0 2px; background: #4a5361; appearance: none; margin-right: 2px; }
.search::placeholder { color: #a4abb4; font-style: italic; opacity: 1; }
.account .user { width: auto; gap: 4px; padding: 0 2px; }
.user-dd { margin: 0 3px 0 17px; }
.sep { width: 1px; height: 12px; margin: 0 3px 0 8px; background: #48505d; }
.qmark { font: bold 11px "Noto Sans", sans-serif; fill: #224e96; }
.window-buttons { display: flex; margin-left: 13px; }
.ribbon-tabs { display: flex; }
.ribbon-tabs button { padding: 0 7px; color: #bdc2c8; }
.ribbon-tabs .active { background: var(--panel); color: #fff; }
.ribbon-tabs .more { margin-left: 12px; }
.more svg { width: 18px; height: 8px; }

/* Ribbon panels */
.ribbon {
  display: grid;
  grid-template-columns: 155fr 141fr 92fr 185fr 59fr 147fr 55fr 56fr 45fr 50fr;
  padding-right: 14px;
  background: var(--dark);
}
.panel { min-width: 0; display: flex; flex-direction: column; background: var(--panel); border: solid #2b333f; border-width: 0 1px; }
.tools { height: 57px; display: flex; gap: 3px; padding: 3px 2px 0; }
.panel h2 { position: relative; height: 14px; display: flex; align-items: center; justify-content: center; gap: 5px; white-space: nowrap; background: #394351; }
.launch { width: 6px; height: 6px; }
.big { flex: 1; display: flex; flex-direction: column; align-items: center; line-height: 12px; white-space: nowrap; }
.big > svg:not(.dd) { width: 26px; height: 26px; margin-bottom: 2px; }
.big > .dd { margin-top: 2px; }
.two { display: block; text-align: center; }
.two > svg:not(.dd) { margin: 0 auto 1px; }
.stack { display: grid; grid-template-rows: repeat(3, 17px); align-content: start; }
.stack button { display: flex; align-items: center; gap: 5px; }
.stack svg:not(.dd), .modify svg:not(.dd), .layer-grid svg { width: 13px; height: 13px; }
.stack .on { outline: 1px solid #69b3dd; background: #31566e; }
.draw { gap: 0; padding: 3px 5px 0 0; }
.draw .stack { margin-left: 5px; }
.modify { display: grid; grid-template: repeat(3, 17px) / 44fr 43fr 29fr 16fr; gap: 0; padding-left: 3px; }
.modify button { display: flex; align-items: center; gap: 4px; white-space: nowrap; }
.solo { justify-content: center; }
.layer-side { width: 152px; display: grid; grid-template-rows: 17px 34px; }
.combo { display: flex; align-items: center; gap: 3px; height: 15px; padding: 0 3px; background: var(--field); }
.combo select { flex: 1; appearance: none; line-height: 12px; }
.layer-combo svg:not(.dd) { width: 11px; height: 11px; }
.swatch { width: 11px; height: 11px; background: #000; }
.layer-grid { display: grid; grid-template: repeat(2, 17px) / repeat(5, 18px); align-items: center; }
.property-grid { width: 114px; display: grid; grid-template: repeat(3, 17px) / 13px 1fr; column-gap: 2px; align-items: center; }
.property-grid > svg { width: 13px; height: 13px; }
.property-grid .combo { height: 15px; }
.property-grid .swatch { margin: 0 5px; }
.line { width: 46px; height: 1px; background: #e3e6e9; margin-left: -2px; }

/* Drawing tabs */
.file-tabs { height: 22px; display: flex; align-items: flex-end; padding: 0 0 1px 16px; border-bottom: 1px solid #515861; }
.file-tab { width: 90px; height: 17px; padding: 0 8px; text-align: left; color: #b9bec5; background: #2d333e; border-radius: 7px 7px 0 0; }
.file-tab.current { display: flex; align-items: center; justify-content: space-between; color: #fff; background: #3c4656; }
.file-tab svg, .add svg { width: 7px; height: 7px; }
.add { width: 20px; height: 15px; margin-left: 3px; display: grid; place-items: center; background: #2d333e; border-radius: 6px; }

/* Model space */
.canvas { position: relative; flex: 1; min-height: 351px; overflow: hidden; background: #fffef0; border-left: 1px solid #8a8a86; color: #4d4d4a; }
.canvas::before { content: ""; position: absolute; inset: 0 0 0 auto; width: 4px; background: #a4d3f2; }
.drawing { position: absolute; left: -1px; top: 0; }
.scale { font: 7px "Liberation Mono", "Noto Sans CJK SC", monospace; fill: #111; }
.array-bar { position: absolute; left: 145px; top: 20px; width: 64px; height: 18px; display: flex; align-items: center; gap: 4px; padding-left: 3px; background: #303b4b; }
.array-bar svg { width: 13px; height: 13px; }
.array-bar .close { align-self: flex-start; margin-left: -3px; }
.array-bar .close svg { width: 6px; height: 8px; }
.grip { width: 3px; height: 12px; background: repeating-linear-gradient(#b5bcc4 0 1px, transparent 1px 3px); }
.doc-buttons { position: absolute; top: 7px; right: 12px; display: flex; gap: 5px; }
.doc-buttons svg { width: 10px; height: 10px; }
.viewcube { position: absolute; top: 25px; right: 11px; width: 76px; display: grid; grid-template: 18px 38px 18px / 18px 40px 18px; place-items: center; color: #aaa9a2; font-size: 10px; }
.viewcube::before { content: ""; position: absolute; inset: 6px; border: 8px solid #fbfaed; border-radius: 50%; }
.viewcube button { position: relative; }
.north, .south { grid-column: 2; }
.west { grid-column: 1; }
.viewcube .face { width: 29px; height: 29px; border: 1px solid #aaa; background: #e9e9e5; color: #777; font-size: 16px; line-height: 24px; }
.wcs { position: absolute; right: 32px; top: 108px; width: 35px; height: 12px; display: flex; align-items: center; justify-content: center; gap: 4px; background: #ecebef; border-radius: 3px; color: #aaa9b1; font-size: 8px; }
.wcs svg { width: 8px; height: 6px; }
.navbar { position: absolute; right: 6px; top: 138px; width: 26px; height: 170px; border: 1px solid #b9b8b0; border-radius: 4px; background: #f5f4e8; }
.navbar svg { width: 24px; height: 144px; }
.ball { position: absolute; right: -20px; top: 176px; width: 34px; height: 34px; border: 2px solid #b9d8bd; border-radius: 50%; background: radial-gradient(#5ccf60, #28a846); color: #fff; font: bold 8px/30px "Noto Sans", sans-serif; padding-left: 3px; }
.find { position: absolute; left: 515px; bottom: 24px; width: 28px; height: 28px; border-radius: 4px; background: #f6504b; }
.ucs { position: absolute; left: -1px; bottom: 3px; font: 14px "Liberation Sans", sans-serif; fill: #444; }
.command { position: absolute; left: 200px; right: 0; bottom: 0; }
.history { display: block; width: 76px; height: 12px; margin-left: 42px; padding: 0 2px; background: #b4b4ab; color: #fff; font: 9px/12px "Liberation Mono", "Noto Sans CJK SC", monospace; }
.command-row { height: 20px; display: flex; align-items: center; background: #63686e; border-top: 1px solid #a8aaa4; border-bottom: 1px solid #a8aaa4; }
.command-row button { width: 17px; display: grid; place-items: center; }
.command-row button svg { width: 11px; height: 11px; }
.command-row .grip { width: 4px; margin-left: 3px; }
.prompt { flex: 1; align-self: stretch; display: flex; align-items: center; gap: 4px; background: #fffffb; padding-left: 3px; }
.prompt svg { width: 20px; height: 12px; }
.prompt input { flex: 1; }
.prompt input::placeholder { color: #999; opacity: 1; }

/* Layout tabs and status bar */
.layout-tabs { height: 16px; display: flex; align-items: flex-start; gap: 3px; padding-left: 9px; }
.layout-tabs button { height: 14px; padding: 0 6px; color: #aeb4bd; background: #2b323e; border-radius: 0 0 7px 7px; }
.layout-tabs .active { padding: 0 8px; background: #3a4250; color: #fff; font-weight: bold; }
.layout-tabs .plus { font-size: 12px; }
.status { height: 20px; display: flex; align-items: center; padding-left: 116px; overflow: hidden; }
.status > * { flex: none; }
.coords { width: 131px; height: 17px; padding-left: 5px; line-height: 17px; background: #363f4d; white-space: nowrap; margin-right: 3px; }
.status button { width: 18px; height: 17px; background: #363f4d; }
.status button svg { width: 17px; height: 17px; }
.status .model { width: 20px; margin-right: 1px; color: #fff; }
.status .on { background: var(--blue); box-shadow: inset 0 0 0 1px #699bd0; }
.sd { width: 10px; height: 17px; padding: 7px 2px; background: #363f4d; }
.sd.wide { width: 12px; }
.status .group { margin-left: 3px; }

/* Windows taskbar */
.taskbar { height: 31px; display: flex; align-items: center; padding: 0 0 1px 6px; background: linear-gradient(90deg, #493529, #5c3d28 25%, #4b3021 50%, #5a3e29 67%, #6e492a); border-bottom: 2px solid #e9ded0; }
.taskbar button svg { width: 24px; height: 24px; margin: auto; }
.taskbar > button { width: 42px; height: 28px; margin-right: 3px; }
.taskbar > .start { width: 28px; margin-right: 15px; }
.taskbar .start svg { width: 28px; height: 28px; }
.taskbar > .petals { width: 24px; margin-right: 11px; }
.task-search { width: 146px; height: 25px; display: flex; align-items: center; background: #f1f1ef; margin: 0 4px 0 0; }
.task-search svg { width: 15px; height: 15px; margin: 0 2px; }
.task-search input { flex: 1; color: #777; }
.task-search button { width: 38px; height: 25px; background: #238bf0; color: #fff; }
.taskbar > .open { border: 1px solid #a39082; background: linear-gradient(125deg, #aa9c91, #59443a 60%, #705745); border-radius: 2px; }
.taskbar > .bright { background: linear-gradient(#d8cfc9, #9d8e84); }
.taskbar > .music { width: 44px; }
.taskbar > .baidu { width: 39px; margin: 0 6px 0 1px; background: linear-gradient(#ffd28d, #ef9425); border-color: #ffd18b; }
.taskbar > .stacked { width: 39px; margin-right: 6px; box-shadow: 2px 0 #4b382b, 3px 0 #9b8471; }
.du { font: bold 8px "Liberation Sans", sans-serif; fill: #fff; }

/* Site mark */
.watermark { position: absolute; right: 0; bottom: 0; width: 312px; height: 156px; display: flex; align-items: center; padding: 0 12px 0 28px; background: #fefefe; color: #0b0b0b; }
.emblem { width: 84px; height: 70px; }
.brand { display: flex; flex-direction: column; font-style: italic; white-space: nowrap; }
.brand strong { font: 900 34px/34px "Noto Sans CJK SC", sans-serif; }
.brand span { font: italic 23px/24px "Open Sans", sans-serif; }
```
